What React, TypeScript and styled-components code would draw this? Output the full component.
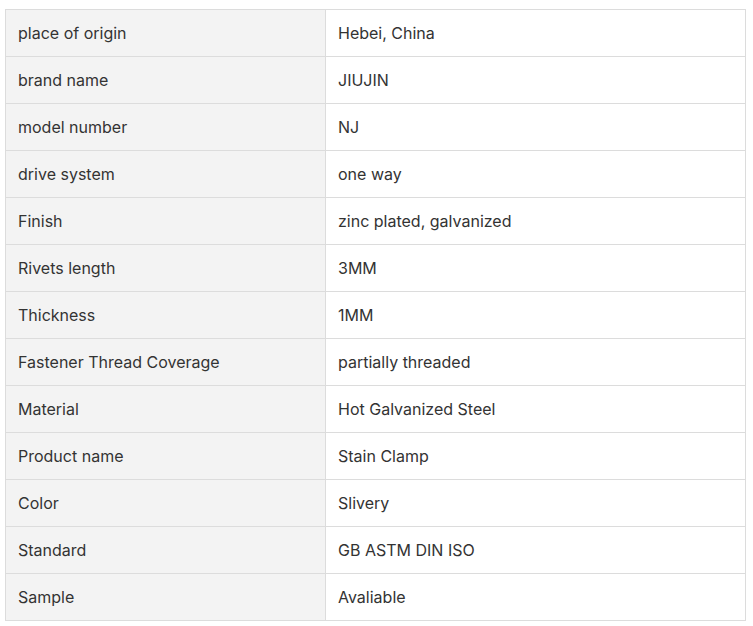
import React from "react";
import styled, { createGlobalStyle } from "styled-components";

const Global = createGlobalStyle`
  html, body { margin: 0; padding: 0; background: #ffffff; }
  body { font-family: Inter, "Noto Sans", sans-serif; }
`;

const Page = styled.div`
  padding: 9px 0 0 5px;
`;

const Table = styled.table`
  border-collapse: collapse;
  width: 741px;
  table-layout: fixed;
  font-family: Inter, "Noto Sans", sans-serif;
  font-size: 16px;
  color: #333333;
`;

const Row = styled.tr`
  height: 47px;
`;

const Cell = styled.td<{ $head?: boolean }>`
  border: 1px solid #dcdcdc;
  padding: 0 12px;
  vertical-align: middle;
  background: ${(p) => (p.$head ? "#f3f3f3" : "#ffffff")};
  width: ${(p) => (p.$head ? "320px" : "auto")};
  box-sizing: border-box;
  line-height: 20px;
`;

const rows: [string, string][] = [
  ["place of origin", "Hebei, China"],
  ["brand name", "JIUJIN"],
  ["model number", "NJ"],
  ["drive system", "one way"],
  ["Finish", "zinc plated, galvanized"],
  ["Rivets length", "3MM"],
  ["Thickness", "1MM"],
  ["Fastener Thread Coverage", "partially threaded"],
  ["Material", "Hot Galvanized Steel"],
  ["Product name", "Stain Clamp"],
  ["Color", "Slivery"],
  ["Standard", "GB ASTM DIN ISO"],
  ["Sample", "Avaliable"],
];

export default function App() {
  return (
    <Page>
      <Global />
      <Table>
        <tbody>
          {rows.map(([k, v]) => (
            <Row key={k}>
              <Cell $head>{k}</Cell>
              <Cell>{v}</Cell>
            </Row>
          ))}
        </tbody>
      </Table>
    </Page>
  );
}
